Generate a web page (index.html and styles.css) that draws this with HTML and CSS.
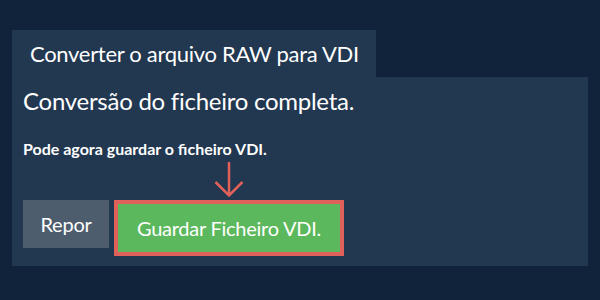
FILE: index.html
```html
<!DOCTYPE html>
<html lang="pt">
<head>
    <meta charset="UTF-8">
    <title>Converter RAW para VDI</title>
    <link rel="stylesheet" href="styles.css">
</head>
<body>
<div class="wrapper">
    <div class="tab">Converter o arquivo RAW para VDI</div>
    <div class="panel">
        <h2 class="title">Conversão do ficheiro completa.</h2>
        <p class="note">Pode agora guardar o ficheiro VDI.</p>
        <div class="actions">
            <button type="button" class="btn btn-reset">Repor</button>
            <div class="save-wrap">
                <svg class="arrow" width="30" height="36" viewBox="0 0 30 36">
                    <path d="M15 1 V34 M1.5 21 L15 34.5 L28.5 21" fill="none" stroke="#e0605a" stroke-width="2.5"/>
                </svg>
                <button type="button" class="btn btn-save">Guardar Ficheiro VDI.</button>
            </div>
        </div>
    </div>
</div>
</body>
</html>
```

FILE: styles.css
```css
body {
    margin: 0;
    background-color: #11233a;
    font-family: Lato, "Liberation Sans", sans-serif;
    color: #ffffff;
}

.wrapper {
    padding: 30px 12px 0 12px;
}

.tab {
    display: inline-block;
    height: 47px;
    line-height: 47px;
    padding: 0 17px 0 18px;
    background-color: #223750;
    font-size: 22px;
    letter-spacing: -0.3px;
}

.panel {
    background-color: #223750;
    padding: 9px 11px 10px 11px;
}

.title {
    margin: 0;
    font-size: 24px;
    font-weight: normal;
    line-height: 30px;
    letter-spacing: -0.26px;
}

.note {
    margin: 23px 0 0 0;
    font-size: 16px;
    font-weight: bold;
    line-height: 19px;
}

.actions {
    display: flex;
    align-items: flex-start;
    gap: 5px;
    margin-top: 3px;
}

.btn {
    font-family: Lato, "Liberation Sans", sans-serif;
    color: #ffffff;
    border: none;
    cursor: pointer;
    font-size: 20px;
    letter-spacing: -0.25px;
}

.btn-reset {
    margin-top: 39px;
    width: 86px;
    height: 48px;
    background-color: #4d5d6e;
}

.save-wrap {
    display: flex;
    flex-direction: column;
    align-items: center;
}

.arrow {
    display: block;
    margin-bottom: 3px;
}

.btn-save {
    width: 230px;
    height: 56px;
    background-color: #5cb85c;
    border: 4px solid #e0605a;
}
```
